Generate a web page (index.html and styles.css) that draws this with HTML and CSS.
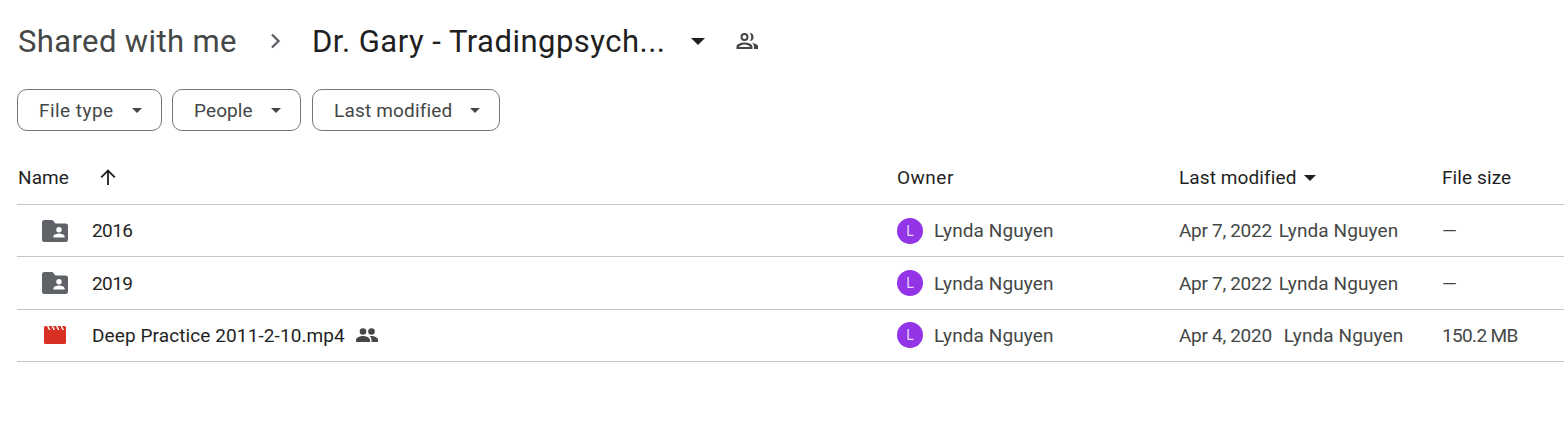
FILE: index.html
```html
<!DOCTYPE html>
<html lang="en">
<head>
<meta charset="utf-8">
<title>Shared with me</title>
<link rel="stylesheet" href="styles.css">
</head>
<body>
<main class="page">
  <nav class="crumbs">
    <span class="crumb-root">Shared with me</span>
    <svg class="crumb-sep" viewBox="0 0 24 24"><path d="M9 5.500 15.500 12 9 18.500" fill="none" stroke="#5f6368" stroke-width="2.400"/></svg>
    <span class="crumb-current">Dr. Gary - Tradingpsych...</span>
    <svg class="crumb-caret" viewBox="0 0 14 7"><path d="M0 0h14L7 7z" fill="#1f1f1f"/></svg>
    <svg class="crumb-people" viewBox="0 0 24 24"><path fill="#444746" fill-rule="evenodd" d="M9.500 12a4 4 0 1 0 0-8 4 4 0 0 0 0 8zm0-6a2 2 0 1 1 0 4 2 2 0 0 1 0-4zM9.500 13.500c-2.700 0-8 1.300-8 4V20h16v-2.500c0-2.700-5.300-4-8-4zM3.700 18c.3-.8 3.400-2.500 5.800-2.500s5.500 1.700 5.800 2.500zM14.500 4a4 4 0 0 1 0 8c1-1 1.700-2.400 1.700-4s-.7-3-1.700-4zM17 13.700c2.400.6 6 1.600 6 3.800V20h-4v-2.500c0-1.500-.8-2.800-2-3.800z"/></svg>
  </nav>

  <div class="filters">
    <button class="chip chip-type">File type<span class="chip-caret"></span></button>
    <button class="chip chip-people">People<span class="chip-caret"></span></button>
    <button class="chip chip-mod">Last modified<span class="chip-caret"></span></button>
  </div>

  <section class="table">
    <div class="row head">
      <div class="c-name">Name
        <svg class="sort-arrow" viewBox="0 0 16 16"><path d="M8 16V1.500M1.200 8.300 8 1.500l6.800 6.800" fill="none" stroke="#1f1f1f" stroke-width="1.800"/></svg>
      </div>
      <div class="h-owner">Owner</div>
      <div class="c-mod">Last modified<span class="head-caret"></span></div>
      <div>File size</div>
    </div>

    <div class="row item">
      <div class="c-name"><span class="icon-cell"><svg class="folder" viewBox="0 0 26 22"><path fill="#5f6368" d="M2.500 0h8l3 3.500h10A2.500 2.500 0 0 1 26 6v13.500a2.500 2.500 0 0 1-2.500 2.500h-21A2.500 2.500 0 0 1 0 19.500v-17A2.500 2.500 0 0 1 2.500 0z"/><circle cx="17" cy="9.700" r="2.700" fill="#fff"/><path fill="#fff" d="M11.500 17.500v-1.200c0-1.800 3.600-2.800 5.500-2.800s5.500 1 5.500 2.800v1.200z"/></svg></span><span class="num">2016</span></div>
      <div class="owner"><span class="avatar">L</span>Lynda Nguyen</div>
      <div class="mod"><span class="date">Apr 7, 2022</span><span>Lynda Nguyen</span></div>
      <div>—</div>
    </div>

    <div class="row item">
      <div class="c-name"><span class="icon-cell"><svg class="folder" viewBox="0 0 26 22"><path fill="#5f6368" d="M2.500 0h8l3 3.500h10A2.500 2.500 0 0 1 26 6v13.500a2.500 2.500 0 0 1-2.500 2.500h-21A2.500 2.500 0 0 1 0 19.500v-17A2.500 2.500 0 0 1 2.500 0z"/><circle cx="17" cy="9.700" r="2.700" fill="#fff"/><path fill="#fff" d="M11.500 17.500v-1.200c0-1.800 3.600-2.800 5.500-2.800s5.500 1 5.500 2.800v1.200z"/></svg></span><span class="num">2019</span></div>
      <div class="owner"><span class="avatar">L</span>Lynda Nguyen</div>
      <div class="mod"><span class="date">Apr 7, 2022</span><span>Lynda Nguyen</span></div>
      <div>—</div>
    </div>

    <div class="row item">
      <div class="c-name"><span class="icon-cell"><svg class="video" viewBox="0 0 22 18"><path fill="#d93025" d="M1.500 0H3l2 4h1.500l-2-4h3l2 4H11L9 0h3l2 4h1.500l-2-4h3l2 4H20l-2-4h2.500A1.500 1.500 0 0 1 22 1.500v15a1.500 1.500 0 0 1-1.500 1.500h-19A1.500 1.500 0 0 1 0 16.500v-15A1.500 1.500 0 0 1 1.500 0z"/></svg></span><span>Deep Practice 2011-2-10.mp4</span>
        <svg class="shared" viewBox="0 0 22 14"><g fill="#444746"><circle cx="7" cy="3.500" r="3.300"/><circle cx="15.500" cy="3.500" r="3.300"/><path d="M0 14v-2c0-2.600 4.700-4 7-4s7 1.400 7 4v2zM15.500 14v-2.200c0-1.500-.7-2.700-1.800-3.600.7-.1 1.300-.2 1.800-.2 2.300 0 6.500 1.400 6.500 4v2z"/></g></svg>
      </div>
      <div class="owner"><span class="avatar">L</span>Lynda Nguyen</div>
      <div class="mod mod-wide"><span class="date">Apr 4, 2020</span><span>Lynda Nguyen</span></div>
      <div class="size">150.2 MB</div>
    </div>
  </section>
</main>
</body>
</html>
```

FILE: styles.css
```css
* { box-sizing: border-box; }
html, body { margin: 0; background: #fff; }
body {
  font-family: Roboto, "Liberation Sans", sans-serif;
  color: #1f1f1f;
  overflow: hidden;
}
.page { padding-left: 17px; height: 434px; }

.crumbs { display: flex; align-items: center; height: 82px; padding-left: 1px; }
.crumb-root { font-size: 31px; color: #444746; width: 219px; letter-spacing: .38px; white-space: nowrap; }
.crumb-sep { width: 24px; height: 24px; margin-left: 26px; }
.crumb-current { font-size: 31px; color: #1f1f1f; margin-left: 25px; white-space: nowrap; width: 354px; letter-spacing: .48px; }
.crumb-caret { width: 14px; height: 7px; margin-left: 25px; }
.crumb-people { width: 24px; height: 24px; margin-left: 30px; }

.filters { display: flex; gap: 10px; margin-top: 7px; height: 42px; }
.chip {
  display: flex; align-items: center; justify-content: space-between;
  height: 42px; padding: 0 19px 0 21px;
  background: #fff; border: 1px solid #747775; border-radius: 10px;
  font: 19px Roboto, "Liberation Sans", sans-serif; letter-spacing: .1px; color: #444746;
}
.chip-type { width: 145px; letter-spacing: .45px; }
.chip-people { width: 129px; }
.chip-mod { width: 188px; margin-left: 1px; letter-spacing: .18px; }
.chip-caret { width: 0; height: 0; border-left: 5px solid transparent; border-right: 5px solid transparent; border-top: 5px solid #444746; }

.table { margin-top: 21px; }
.row {
  display: grid; grid-template-columns: 879px 282px 263px 1fr;
  align-items: center;
  border-bottom: 1px solid #c7c7c7;
  padding-left: 1px;
  font-size: 19px;
  letter-spacing: .1px;
}
.row > div { display: flex; align-items: center; white-space: nowrap; }
.head { height: 53px; padding-bottom: 2px; color: #1f1f1f; }
.h-owner { letter-spacing: .5px; }
.item { height: 52.400px; color: #444746; }
.sort-arrow { width: 16px; height: 16px; margin-left: 31px; }
.head-caret { width: 0; height: 0; margin-left: 8px; margin-top: 2px; border-left: 6px solid transparent; border-right: 6px solid transparent; border-top: 6px solid #1f1f1f; }
.c-name { color: #1f1f1f; }
.icon-cell { width: 74px; display: flex; justify-content: flex-start; padding-left: 24px; }
.folder { width: 26px; height: 22px; }
.video { width: 22px; height: 18px; margin-left: 2px; }
.num { letter-spacing: -.6px; }
.shared { width: 22px; height: 14px; margin-left: 11px; }
.owner { gap: 11px; }
.avatar {
  width: 26px; height: 26px; border-radius: 50%;
  background: #9334e6; color: #e8d5fa;
  display: flex; align-items: center; justify-content: center;
  font-size: 14px;
}
.mod { gap: 7px; }
.mod-wide { gap: 12px; }
.date { letter-spacing: -.3px; }
.size { letter-spacing: -.65px; }
```
